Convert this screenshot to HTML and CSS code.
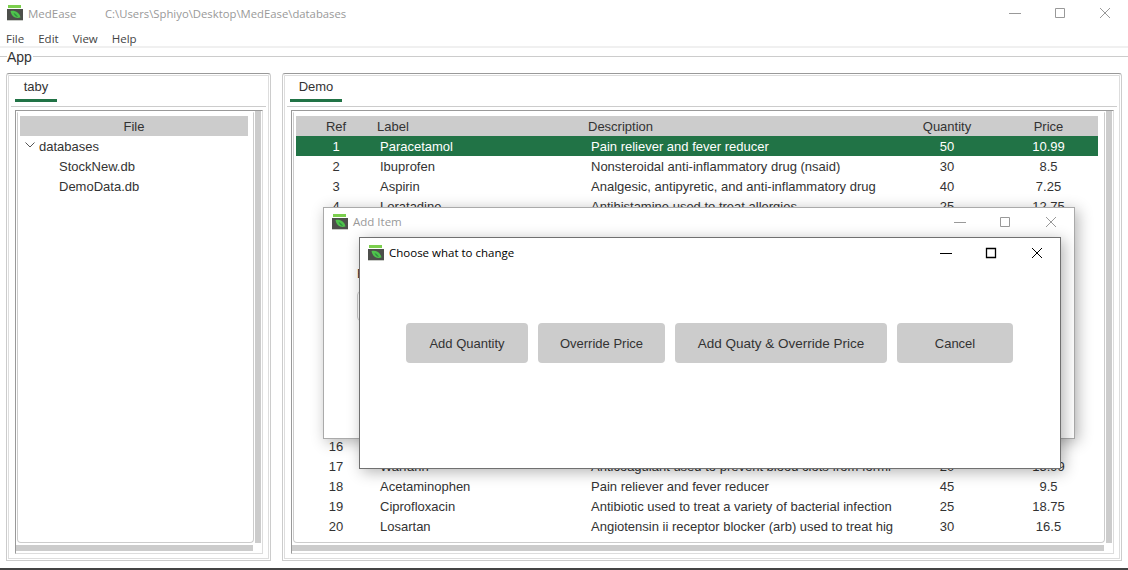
FILE: index.html
```html
<!DOCTYPE html>
<html lang="en">
<head>
    <meta charset="UTF-8">
    <meta name="viewport" content="width=device-width, initial-scale=1.0">
    <title>MedEase</title>
    <link rel="stylesheet" href="styles.css">
</head>
<body>

    <svg class="icon-defs" width="0" height="0">
        <symbol id="logo" viewBox="0 0 16 16">
            <rect x="1" y="0" width="13" height="3" fill="#7ccf4e"/>
            <rect x="0" y="4" width="16" height="11" fill="#4d4f4b"/>
            <rect x="0" y="15" width="16" height="1" fill="#c9cbc7"/>
            <path d="M3.5 6 C8 5 12.5 7.5 13.5 12.5 C8.5 14 4.5 11.5 3.5 6Z" fill="#4fc24c"/>
            <path d="M6.5 8 C8.5 8.5 10 10 11 12 C9 12 7.5 10.5 6.5 8Z" fill="#2f9440"/>
        </symbol>
    </svg>

    <header class="titlebar">
        <svg class="logo"><use href="#logo"/></svg>
        <span class="app-name">MedEase</span>
        <span class="app-path">C:\Users\Sphiyo\Desktop\MedEase\databases</span>
        <div class="win-buttons">
            <svg viewBox="0 0 12 12"><path d="M0 6.5H12"/></svg>
            <svg viewBox="0 0 12 12"><path d="M1.5 1.5H10.5V10.5H1.5Z"/></svg>
            <svg viewBox="0 0 12 12"><path d="M1 1L11 11M11 1L1 11"/></svg>
        </div>
    </header>

    <nav class="menubar">
        <span>File</span>
        <span>Edit</span>
        <span>View</span>
        <span>Help</span>
    </nav>

    <section class="app-group">
        <span class="app-legend">App</span>
        <div class="panels">

            <div class="panel panel-left">
                <div class="tabs"><span class="tab tab-taby">taby</span></div>
                <div class="view">
                    <div class="view-body">
                        <div class="tree-head">File</div>
                        <div class="tree-row tree-root">
                            <svg class="chevron" viewBox="0 0 10 6"><path d="M0.5 0.5L5 5L9.5 0.5"/></svg>
                            databases
                        </div>
                        <div class="tree-row tree-leaf">StockNew.db</div>
                        <div class="tree-row tree-leaf">DemoData.db</div>
                    </div>
                    <div class="scroll-v"></div>
                    <div class="scroll-h"></div>
                </div>
            </div>

            <div class="panel panel-right">
                <div class="tabs"><span class="tab tab-demo">Demo</span></div>
                <div class="view">
                    <div class="view-body">
                        <div class="row row-head">
                            <span class="c">Ref</span><span>Label</span><span>Description</span><span class="c">Quantity</span><span class="c">Price</span>
                        </div>
                        <div class="row row-selected">
                            <span class="c">1</span><span>Paracetamol</span><span>Pain reliever and fever reducer</span><span class="c">50</span><span class="c">10.99</span>
                        </div>
                        <div class="row">
                            <span class="c">2</span><span>Ibuprofen</span><span>Nonsteroidal anti-inflammatory drug (nsaid)</span><span class="c">30</span><span class="c">8.5</span>
                        </div>
                        <div class="row">
                            <span class="c">3</span><span>Aspirin</span><span>Analgesic, antipyretic, and anti-inflammatory drug</span><span class="c">40</span><span class="c">7.25</span>
                        </div>
                        <div class="row">
                            <span class="c">4</span><span>Loratadine</span><span>Antihistamine used to treat allergies</span><span class="c">25</span><span class="c">12.75</span>
                        </div>
                        <div class="row-gap"></div>
                        <div class="row">
                            <span class="c">16</span><span></span><span></span><span class="c"></span><span class="c"></span>
                        </div>
                        <div class="row">
                            <span class="c">17</span><span>Warfarin</span><span>Anticoagulant used to prevent blood clots from formi</span><span class="c">20</span><span class="c">15.99</span>
                        </div>
                        <div class="row">
                            <span class="c">18</span><span>Acetaminophen</span><span>Pain reliever and fever reducer</span><span class="c">45</span><span class="c">9.5</span>
                        </div>
                        <div class="row">
                            <span class="c">19</span><span>Ciprofloxacin</span><span>Antibiotic used to treat a variety of bacterial infection</span><span class="c">25</span><span class="c">18.75</span>
                        </div>
                        <div class="row">
                            <span class="c">20</span><span>Losartan</span><span>Angiotensin ii receptor blocker (arb) used to treat hig</span><span class="c">30</span><span class="c">16.5</span>
                        </div>
                    </div>
                    <div class="scroll-v"></div>
                    <div class="scroll-h"></div>
                </div>
            </div>

        </div>
    </section>
    <div class="bottom-edge"></div>

    <!-- Add Item window, sits behind the prompt -->
    <div class="window window-add">
        <div class="win-title">
            <svg class="logo"><use href="#logo"/></svg>
            <span>Add Item</span>
            <div class="win-buttons win-buttons-small">
                <svg viewBox="0 0 12 12"><path d="M0 6.5H12"/></svg>
                <svg viewBox="0 0 12 12"><path d="M1.5 1.5H10.5V10.5H1.5Z"/></svg>
                <svg viewBox="0 0 12 12"><path d="M1 1L11 11M11 1L1 11"/></svg>
            </div>
        </div>
        <div class="add-form">
            <div class="add-label">Enter</div>
            <div class="add-input"></div>
        </div>
    </div>

    <!-- Choose prompt, active window -->
    <div class="window window-choose">
        <div class="win-title">
            <svg class="logo"><use href="#logo"/></svg>
            <span>Choose what to change</span>
            <div class="win-buttons win-buttons-small">
                <svg viewBox="0 0 12 12"><path d="M0 6.5H12"/></svg>
                <svg viewBox="0 0 12 12"><path d="M1.5 1.5H10.5V10.5H1.5Z"/></svg>
                <svg viewBox="0 0 12 12"><path d="M1 1L11 11M11 1L1 11"/></svg>
            </div>
        </div>
        <div class="choices">
            <button class="btn-quantity">Add Quantity</button>
            <button class="btn-price">Override Price</button>
            <button class="btn-both">Add Quaty &amp; Override Price</button>
            <button class="btn-cancel">Cancel</button>
        </div>
    </div>

</body>
</html>
```

FILE: styles.css
```css
* {
    box-sizing: border-box;
}
html, body {
    margin: 0;
    height: 570px;
    overflow: hidden;
}
body {
    position: relative;
    background-color: #fff;
    font-family: "Liberation Sans", Arial, sans-serif;
    font-size: 13px;
    color: #333;
}
.icon-defs {
    position: absolute;
}
.logo {
    width: 16px;
    height: 16px;
    flex: none;
}

/* title and menu */
.titlebar {
    display: flex;
    align-items: center;
    height: 28px;
    padding: 0 0 2px 7px;
    font-family: "Open Sans", sans-serif;
    font-size: 11.5px;
    color: #999;
}
.app-name {
    margin-left: 5px;
    width: 77px;
}
.app-path {
    font-size: 11.3px;
}
.win-buttons {
    display: flex;
    margin-left: auto;
    gap: 33px;
    padding-right: 17px;
}
.win-buttons svg {
    width: 12px;
    height: 12px;
    fill: none;
    stroke: #999;
    stroke-width: 1;
}
.menubar {
    display: flex;
    gap: 14px;
    align-items: center;
    height: 20px;
    padding: 2px 0 0 6px;
    font-family: "Open Sans", sans-serif;
    font-size: 11.5px;
    color: #444;
    border-bottom: 2px solid #f0f0f0;
}

/* app group box */
.app-group {
    position: relative;
    height: 516px;
    padding: 25px 6px 0 6px;
}
.app-group::before {
    content: "";
    position: absolute;
    left: 0;
    right: 0;
    top: 8px;
    height: 1px;
    background-color: #ccc;
}
.app-legend {
    position: absolute;
    left: 7px;
    top: 1px;
    padding-right: 1px;
    background-color: #fff;
    font-size: 14px;
    line-height: 16px;
}
.panels {
    display: flex;
    gap: 11px;
    height: 488px;
}
.panel {
    display: flex;
    flex-direction: column;
    border: 1px solid #ccc;
    border-top-color: #999;
    border-radius: 3px 3px 0 0;
    padding: 2px 2px 3px 2px;
    box-shadow: inset 0 0 0 1px #fff, inset 0 0 0 2px #ddd;
}
.panel-left {
    width: 265px;
}
.panel-right {
    width: 840px;
}
.tabs {
    height: 31px;
    flex: none;
    margin: 0 2px;
    border-bottom: 1px solid #ccc;
}
.tab {
    display: inline-block;
    height: 26px;
    margin-left: 4px;
    border-bottom: 3px solid #217346;
    text-align: center;
    font-size: 13px;
    line-height: 21px;
}
.tab-taby {
    width: 42px;
}
.tab-demo {
    width: 52px;
    margin-left: 3px;
}

/* table and tree frame */
.view {
    position: relative;
    flex: 1;
    margin: 3px 5px 3px 6px;
    padding: 1px 8px 0 1px;
    border: 1px solid #ddd;
    border-top-color: #999;
    border-left-color: #999;
    overflow: hidden;
}
.view-body {
    height: 431px;
    padding: 3px 5px 0 2px;
    border: 1px solid #ccc;
    border-top-color: #fff;
    border-radius: 0 0 4px 4px;
    overflow: hidden;
}
.panel-right .view-body {
    padding-right: 6px;
}
.scroll-v {
    position: absolute;
    top: 0;
    right: 1px;
    width: 6px;
    height: 432px;
    background-color: #ccc;
}
.scroll-h {
    position: absolute;
    left: 0;
    right: 9px;
    bottom: 2px;
    height: 6px;
    background-color: #ccc;
}
.tree-head {
    height: 20px;
    background-color: #ccc;
    text-align: center;
    line-height: 22px;
}
.tree-row {
    height: 20px;
    line-height: 22px;
}
.tree-root {
    display: flex;
    align-items: center;
    padding: 2px 0 0 5px;
    gap: 4px;
}
.chevron {
    width: 10px;
    height: 6px;
    margin-top: -4px;
    fill: none;
    stroke: #555;
}
.tree-leaf {
    padding-left: 39px;
}
.row {
    display: grid;
    grid-template-columns: 80px 211px 308px 104px 99px;
    height: 20px;
    line-height: 22px;
    white-space: nowrap;
}
.row span {
    overflow: hidden;
    padding-left: 4px;
}
.row span.c {
    padding-left: 0;
    text-align: center;
}
.row-head {
    background-color: #ccc;
}
.row-head span {
    padding-left: 1px;
}
.row-selected {
    background-color: #217346;
    color: #fff;
}
.row-gap {
    height: 220px;
}

.bottom-edge {
    position: absolute;
    left: 0;
    right: 0;
    bottom: 0;
    height: 2px;
    background-color: #444;
}

/* floating windows */
.window {
    position: absolute;
    background-color: #fff;
    border: 1px solid #aaa;
    box-shadow: 3px 3px 14px rgba(0, 0, 0, 0.3);
}
.window-add {
    left: 323px;
    top: 207px;
    width: 752px;
    height: 232px;
}
.window-add .win-title {
    padding-bottom: 2px;
}
.window-choose {
    left: 359px;
    top: 237px;
    width: 702px;
    height: 232px;
    border-color: #707070;
}
.win-title {
    display: flex;
    align-items: center;
    height: 29px;
    padding-left: 8px;
    gap: 5px;
    font-family: "Open Sans", sans-serif;
    font-size: 11.5px;
    color: #999;
}
.window-choose .win-title {
    color: #000;
}
.win-buttons-small {
    padding-right: 17px;
    gap: 33px;
}
.win-buttons-small svg:last-child {
    margin-left: 1px;
}
.window-choose .win-buttons svg {
    stroke: #000;
}
.window-choose .win-buttons svg:nth-child(2) {
    stroke-width: 1.3;
}
.add-form {
    padding: 27px 0 0 33px;
}
.add-label {
    height: 20px;
    line-height: 20px;
}
.add-input {
    width: 300px;
    height: 30px;
    margin-top: 7px;
    border: 1px solid #ccc;
    border-radius: 4px;
}
.choices {
    display: flex;
    gap: 10px;
    padding: 56px 0 0 46px;
}
button {
    height: 40px;
    background-color: #ccc;
    border: none;
    border-radius: 4px;
    color: #333;
    font-family: "Liberation Sans", Arial, sans-serif;
    font-size: 13px;
    padding: 0;
}
.btn-quantity {
    width: 122px;
}
.btn-price {
    width: 127px;
}
.btn-both {
    width: 212px;
    font-size: 13.5px;
}
.btn-cancel {
    width: 116px;
}
```
